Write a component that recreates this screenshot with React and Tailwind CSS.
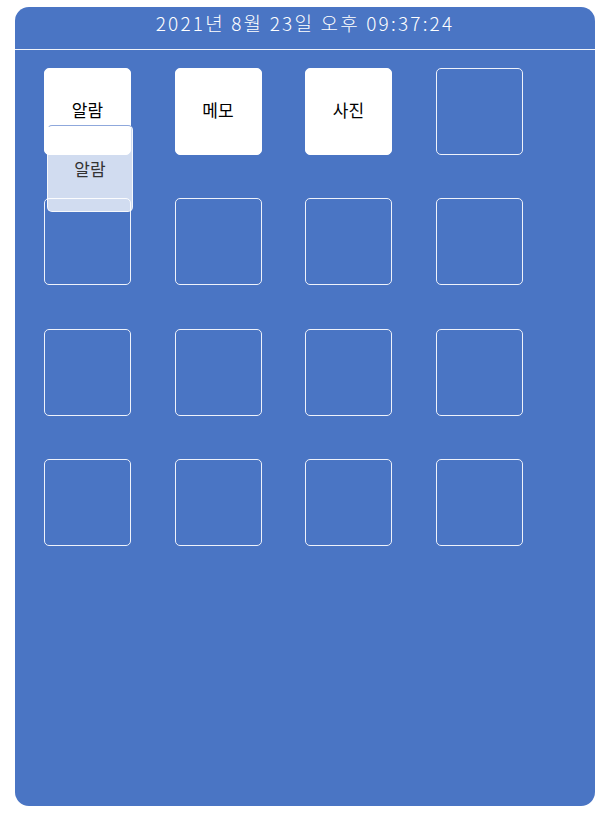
import React from "react";

const apps = ["알람", "메모", "사진"];

function Cell({ label }) {
  if (label) {
    return (
      <div className="w-[87px] h-[87px] rounded-[5px] bg-white border border-white flex items-center justify-center pb-[3px] text-[17px] text-black">
        {label}
      </div>
    );
  }
  return <div className="w-[87px] h-[87px] rounded-[5px] border border-[#eef2fb]" />;
}

export default function App() {
  const cells = Array.from({ length: 16 }, (_, i) => apps[i] || null);

  return (
    <div className="w-[608px] h-[814px] bg-white pt-[7px] pl-[15px]" style={{ fontFamily: '"Noto Sans CJK KR", "DejaVu Sans", sans-serif' }}>
      <div className="relative w-[580px] h-[799px] bg-[#4a75c4] rounded-[14px]">
        <div className="h-[43px] border-b border-[#f0f3fa] flex items-center justify-center text-[19px] font-light text-white tracking-[2.2px] pb-[9px]">
          2021년 8월 23일 오후 09:37:24
        </div>
        <div className="pl-[29px] pt-[18px] grid grid-cols-[repeat(4,87px)] gap-x-[43.5px] gap-y-[43.3px]">
          {cells.map((label, i) => (
            <Cell key={i} label={label} />
          ))}
        </div>

        {/* drag ghost */}
        <div className="absolute left-[32px] top-[118px] w-[86px] h-[87px] rounded-[5px] bg-white/75 border border-white/80 border-t-[#8fa8dc] flex items-center justify-center text-[17px] text-[#333]">
          알람
        </div>
      </div>
    </div>
  );
}
